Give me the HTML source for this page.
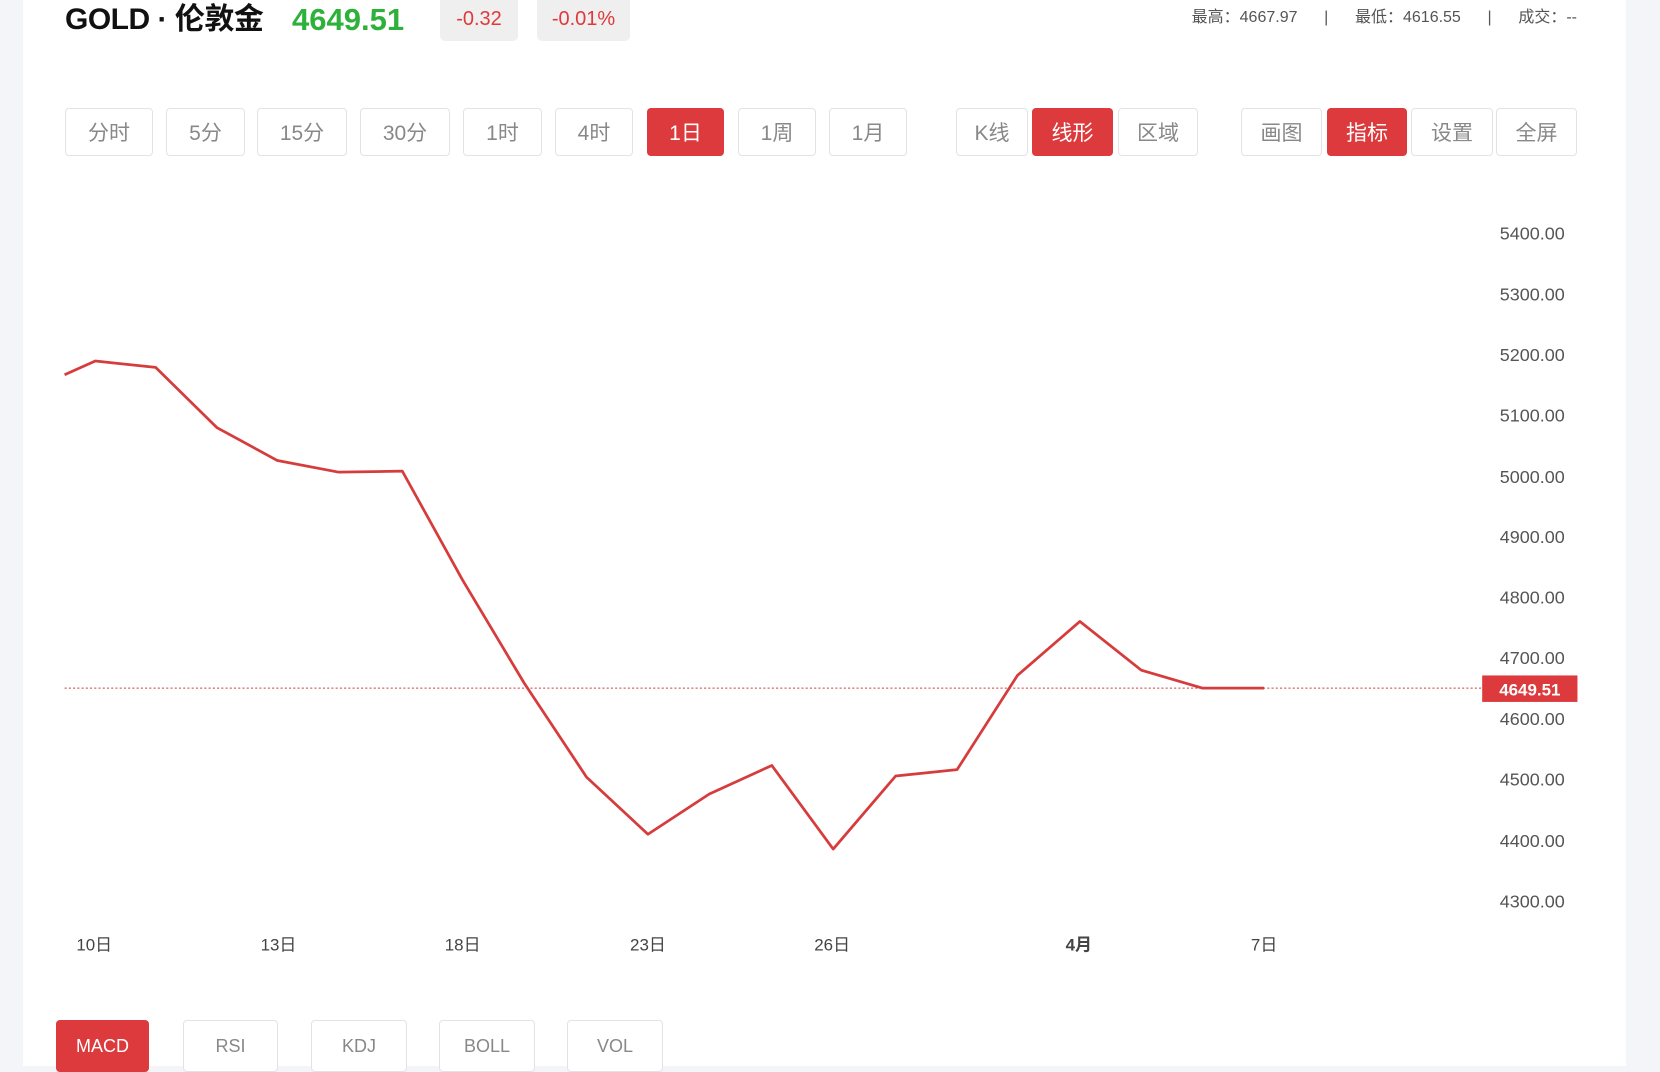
<!DOCTYPE html>
<html><head><meta charset="utf-8"><style>
*{margin:0;padding:0;box-sizing:border-box}
body{width:1660px;height:1066px;overflow:hidden;background:#f4f5f9;font-family:"Liberation Sans","Noto Sans CJK SC",sans-serif;position:relative}
.main{position:absolute;left:23px;top:0;width:1603px;height:1066px;background:#fff}
.abs{position:absolute}
.title{left:65px;top:0;font-size:30px;font-weight:bold;color:#111;line-height:40px;letter-spacing:-0.5px}
.price{left:292px;top:0;font-size:31px;font-weight:bold;color:#2db13a;line-height:40px}
.badge{top:0;height:41px;background:#efefef;color:#e0393b;font-size:20px;line-height:38px;text-align:center;border-radius:0 0 5px 5px}
.stats{right:83px;top:8px;font-size:16px;color:#555;line-height:20px;white-space:pre}
.btn{position:absolute;top:108px;height:48px;border:1px solid #e3e3e3;border-radius:4px;background:#fff;color:#888;font-size:21px;line-height:50px;text-align:center}
.on{background:#dc3a3c;border-color:#dc3a3c;color:#fff}
.b2{top:1020px;height:52px;font-size:18px;line-height:50px}
</style></head><body>
<div class="main"></div>
<div class="abs title">GOLD · 伦敦金</div>
<div class="abs price">4649.51</div>
<div class="abs badge" style="left:440px;width:78px">-0.32</div>
<div class="abs badge" style="left:537px;width:93px">-0.01%</div>
<div class="abs stats">最高：4667.97      |      最低：4616.55      |      成交：--</div>

<div class="btn" style="left:65px;width:88px">分时</div>
<div class="btn" style="left:166px;width:79px">5分</div>
<div class="btn" style="left:257px;width:90px">15分</div>
<div class="btn" style="left:360px;width:90px">30分</div>
<div class="btn" style="left:463px;width:79px">1时</div>
<div class="btn" style="left:555px;width:78px">4时</div>
<div class="btn on" style="left:647px;width:77px">1日</div>
<div class="btn" style="left:738px;width:78px">1周</div>
<div class="btn" style="left:829px;width:78px">1月</div>
<div class="btn" style="left:956px;width:72px">K线</div>
<div class="btn on" style="left:1032px;width:81px">线形</div>
<div class="btn" style="left:1118px;width:80px">区域</div>
<div class="btn" style="left:1241px;width:81px">画图</div>
<div class="btn on" style="left:1327px;width:80px">指标</div>
<div class="btn" style="left:1411px;width:82px">设置</div>
<div class="btn" style="left:1496px;width:81px">全屏</div>

<svg class="abs" style="left:0;top:0" width="1660" height="1066">
<g transform="scale(1.0587)">
<g font-family="Liberation Sans, Noto Sans CJK SC, sans-serif" font-size="17" fill="#555" text-anchor="end">
<text x="1478" y="226">5400.00</text>
<text x="1478" y="284">5300.00</text>
<text x="1478" y="341">5200.00</text>
<text x="1478" y="398">5100.00</text>
<text x="1478" y="456">5000.00</text>
<text x="1478" y="513">4900.00</text>
<text x="1478" y="570">4800.00</text>
<text x="1478" y="627">4700.00</text>
<text x="1478" y="685">4600.00</text>
<text x="1478" y="742">4500.00</text>
<text x="1478" y="800">4400.00</text>
<text x="1478" y="857">4300.00</text>
</g>
<line x1="61" y1="650" x2="1400" y2="650" stroke="#d04040" stroke-width="1" stroke-dasharray="2,2"/>
<rect x="1400" y="638" width="90" height="25" fill="#dc3a3c"/>
<text x="1445" y="657" font-size="16" font-weight="bold" fill="#fff" text-anchor="middle" font-family="Liberation Sans, sans-serif">4649.51</text>
<polyline fill="none" stroke="#d63c3c" stroke-width="2.6" stroke-linejoin="round" points="61,354 90,341 147,347 205,404 262,435 320,446 380,445 437,548 495,645 554,734 612,788 670,750 729,723 787,802 846,733 904,727 961,638 1020,587 1078,633 1136,650 1194,650"/>
<g font-family="Liberation Sans, Noto Sans CJK SC, sans-serif" font-size="16" fill="#444" text-anchor="middle">
<text x="89" y="898">10日</text>
<text x="263" y="898">13日</text>
<text x="437" y="898">18日</text>
<text x="612" y="898">23日</text>
<text x="786" y="898">26日</text>
<text x="1019" y="898" font-weight="bold">4月</text>
<text x="1194" y="898">7日</text>
</g>
</g>
</svg>

<div class="btn b2 on" style="left:56px;width:93px">MACD</div>
<div class="btn b2" style="left:183px;width:95px">RSI</div>
<div class="btn b2" style="left:311px;width:96px">KDJ</div>
<div class="btn b2" style="left:439px;width:96px">BOLL</div>
<div class="btn b2" style="left:567px;width:96px">VOL</div>
</body></html>
